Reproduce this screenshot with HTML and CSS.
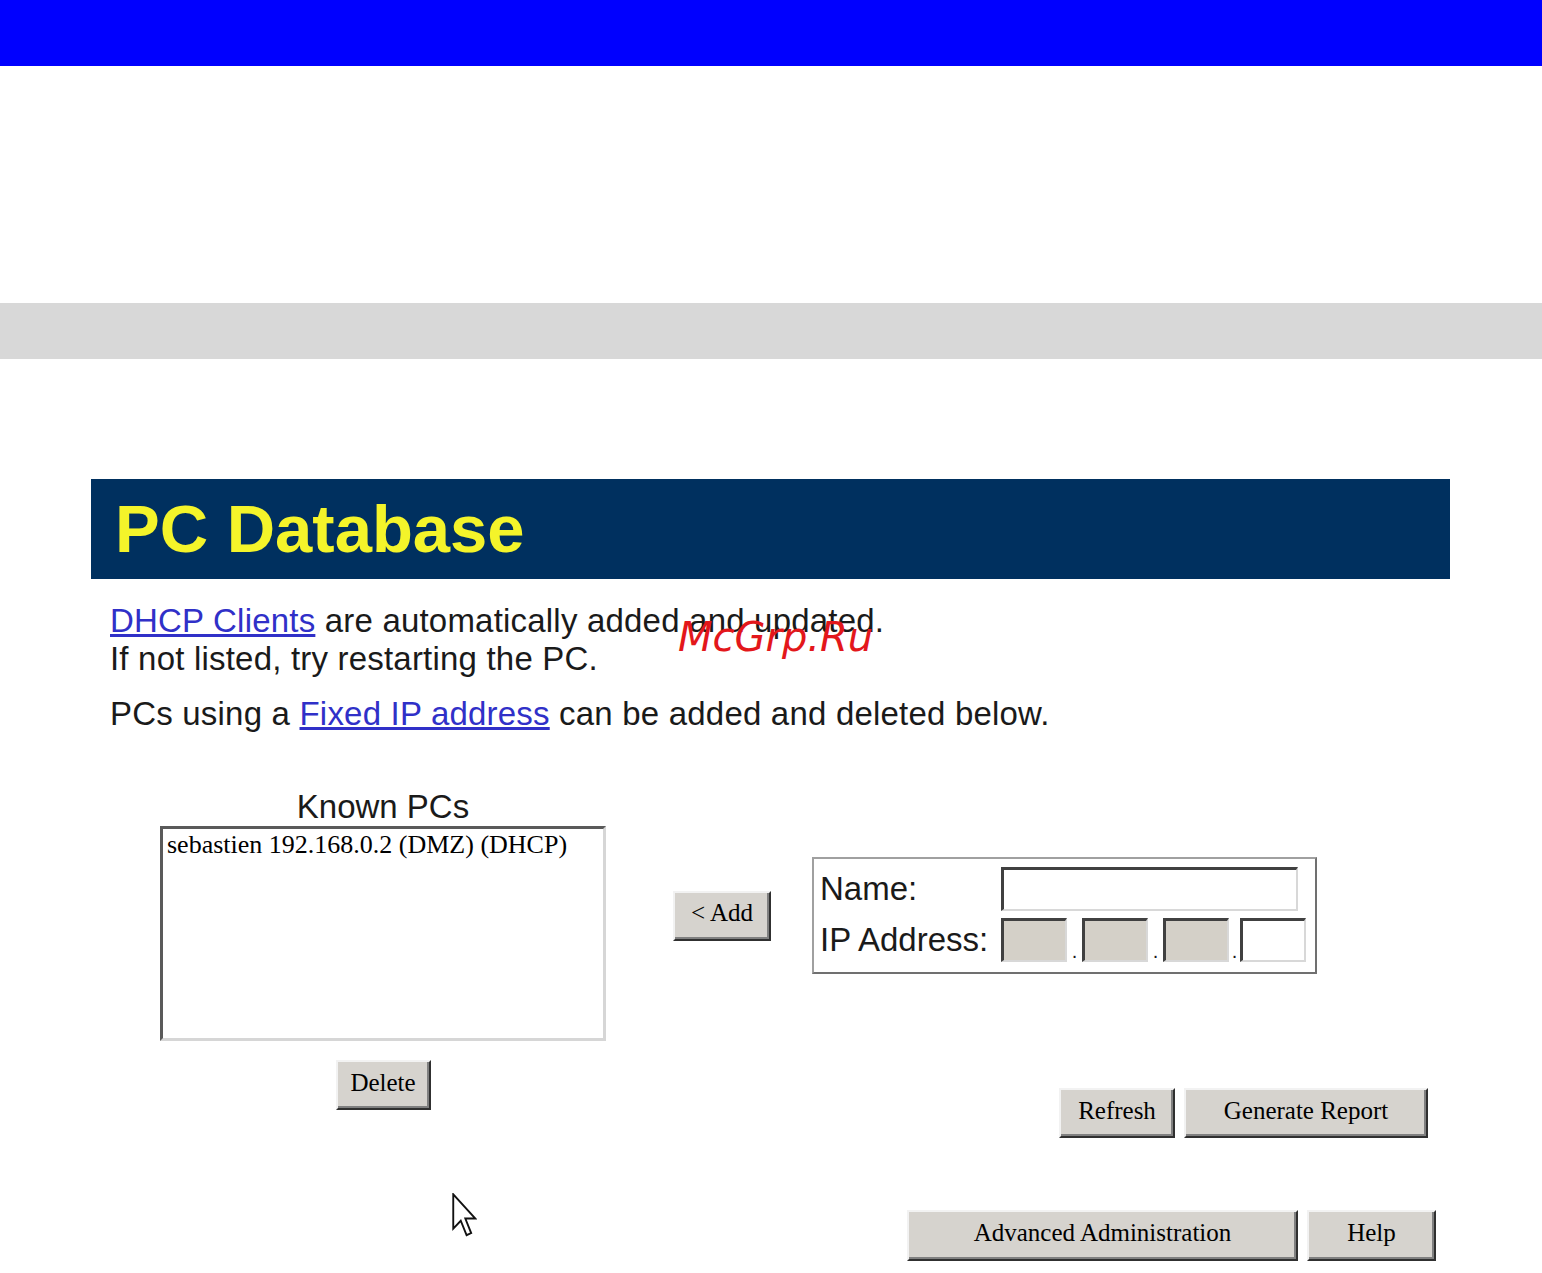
FILE: index.html
```html
<!DOCTYPE html>
<html>
<head>
<meta charset="utf-8">
<title>PC Database</title>
<link rel="stylesheet" href="styles.css">
</head>
<body>
<div class="topbar"></div>
<div class="graybar"></div>
<div class="page">
  <div class="title"><h1>PC Database</h1></div>
  <div class="intro">
    <p class="p1"><a href="#">DHCP Clients</a> are automatically added and updated.<br>If not listed, try restarting the PC.</p>
    <p class="p2">PCs using a <a href="#">Fixed IP address</a> can be added and deleted below.</p>
    <span class="watermark">McGrp.Ru</span>
  </div>
  <div class="form-area">
    <div class="known">
      <div class="known-label">Known PCs</div>
      <div class="listbox"><div class="option">sebastien 192.168.0.2 (DMZ) (DHCP)</div></div>
      <button class="btn btn-delete">Delete</button>
    </div>
    <div class="right">
      <div class="entry-row">
        <button class="btn btn-add">&lt; Add</button>
        <div class="entry-box">
          <div class="entry-line"><span class="lbl">Name:</span><span class="field name-field"></span></div>
          <div class="entry-line"><span class="lbl">IP Address:</span><span class="field ip gray"></span><span class="dot">.</span><span class="field ip gray"></span><span class="dot">.</span><span class="field ip gray"></span><span class="dot dot-last">.</span><span class="field ip"></span></div>
        </div>
      </div>
      <div class="action-row">
        <button class="btn btn-refresh">Refresh</button>
        <button class="btn btn-report">Generate Report</button>
      </div>
    </div>
  </div>
  <div class="nav-row">
    <button class="btn btn-adv">Advanced Administration</button>
    <button class="btn btn-help">Help</button>
  </div>
</div>
<svg class="cursor" viewBox="0 0 12 20" preserveAspectRatio="none" width="25" height="44">
  <path d="M0.6 0.6 L0.6 16.2 L4.2 12.6 L7 19.2 L9.2 18.2 L6.4 11.6 L11.2 11.6 Z" fill="#fff" stroke="#111" stroke-width="0.9" stroke-linejoin="miter"/>
</svg>
</body>
</html>
```
FILE: styles.css
```css
* { box-sizing: border-box; }
body {
  margin: 0;
  background: #fff;
  font-family: "Liberation Sans", Arial, sans-serif;
  color: #1a1a1a;
  position: relative;
}
.topbar { height: 66px; background: #0000ff; margin-bottom: 237px; }
.graybar { height: 56px; background: #d8d8d8; margin-bottom: 120px; }
.page { margin-left: 91px; width: 1359px; }
.title { height: 100px; background: #00305f; padding-left: 24px; }
.title h1 {
  margin: 0;
  font-size: 67px;
  line-height: 100px;
  font-weight: bold;
  color: #f4f42a;
}
.intro { position: relative; padding-left: 19px; font-size: 33px; line-height: 38px; letter-spacing: 0.2px; }
.intro p { margin: 0; }
.intro .p1 { padding-top: 23px; }
.intro .p2 { margin-top: 17px; }
.intro a { color: #3030c8; text-decoration: underline; }
.watermark {
  position: absolute;
  left: 587px;
  top: 38px;
  font-family: "DejaVu Sans", sans-serif;
  font-style: italic;
  font-size: 40px;
  line-height: 40px;
  letter-spacing: 0;
  color: #e3171b;
}
.form-area { display: flex; align-items: flex-start; margin-top: 55px; }
.known { margin-left: 69px; width: 446px; }
.known-label { text-align: center; font-size: 33px; line-height: 38px; }
.listbox {
  width: 446px;
  height: 215px;
  background: #fff;
  border-top: 3px solid #5a5a5a;
  border-left: 3px solid #5a5a5a;
  border-right: 3px solid #d6d6d6;
  border-bottom: 3px solid #d6d6d6;
  padding: 1px 4px;
}
.option {
  font-family: "Liberation Serif", "Times New Roman", serif;
  font-size: 26px;
  line-height: 30px;
  color: #000;
}
.btn {
  display: block;
  height: 50px;
  padding: 0 0 5px;
  background: #d6d3ce;
  color: #000;
  font-family: "Liberation Serif", "Times New Roman", serif;
  font-size: 25px;
  border-top: 2px solid #f2f2f2;
  border-left: 2px solid #f2f2f2;
  border-right: 2px solid #303030;
  border-bottom: 2px solid #303030;
  box-shadow: inset -2px -2px 0 #808080;
}
.btn-delete { width: 95px; margin: 19px auto 0; }
.right { flex: 1; margin-left: 67px; padding-right: 22px; }
.entry-row { display: flex; align-items: center; margin-top: 69px; }
.btn-add { width: 98px; }
.entry-box {
  margin-left: 41px;
  width: 505px;
  height: 117px;
  border-top: 2px solid #a0a0a0;
  border-left: 2px solid #a0a0a0;
  border-right: 2px solid #707070;
  border-bottom: 2px solid #707070;
  padding: 8px 0 10px 6px;
  display: flex;
  flex-direction: column;
  gap: 7px;
}
.entry-line { display: flex; align-items: center; height: 44px; }
.lbl { width: 181px; font-size: 33px; line-height: 38px; }
.field {
  height: 44px;
  background: #fff;
  border-top: 3px solid #404040;
  border-left: 3px solid #404040;
  border-right: 2px solid #d8d8d8;
  border-bottom: 2px solid #d8d8d8;
}
.name-field { width: 297px; }
.ip { width: 66px; }
.ip.gray { background: #d4d0c8; }
.dot { width: 15px; text-align: center; font-size: 20px; align-self: flex-end; line-height: 22px; }
.dot-last { width: 11px; }
.action-row { display: flex; justify-content: flex-end; gap: 9px; margin-top: 114px; }
.btn-refresh { width: 116px; }
.btn-report { width: 244px; }
.nav-row { display: flex; justify-content: flex-end; gap: 9px; margin-top: 72px; padding-right: 14px; }
.btn-adv { width: 391px; height: 51px; }
.btn-help { width: 129px; height: 51px; }
.cursor { position: absolute; left: 452px; top: 1193px; }
```
